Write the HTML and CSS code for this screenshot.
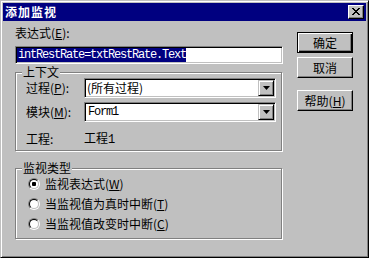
FILE: index.html
```html
<!DOCTYPE html>
<html lang="zh-CN">
  <head>
    <meta charset="UTF-8" />
    <meta name="viewport" content="width=device-width, initial-scale=1.0" />
    <title>添加监视</title>
    <link rel="stylesheet" href="styles.css">
  </head>
  <body>
    <div class="window">
      <div class="titlebar">
        <span class="title">添加监视</span>
        <span class="close">
          <svg width="8" height="7" viewBox="0 0 8 7">
            <path d="M0 0h2v1H0zM6 0h2v1H6zM1 1h2v1H1zM5 1h2v1H5zM2 2h4v1H2zM3 3h2v1H3zM2 4h4v1H2zM1 5h2v1H1zM5 5h2v1H5zM0 6h2v1H0zM6 6h2v1H6z" fill="#000" />
          </svg>
        </span>
      </div>
      <div class="body">
        <div class="main">
          <div class="label">表达式(<u>E</u>):</div>
          <div class="textbox"><span class="sel">intRestRate=txtRestRate.Text</span></div>

          <div class="group context">
            <div class="group-title">上下文</div>
            <div class="fields">
              <span class="field-label">过程(<u>P</u>):</span>
              <div class="combo">
                <span class="value">(所有过程)</span>
                <span class="drop">
                  <svg width="7" height="4" viewBox="0 0 7 4"><path d="M0 0h7L3.5 4z" fill="#000" /></svg>
                </span>
              </div>
              <span class="field-label">模块(<u>M</u>):</span>
              <div class="combo">
                <span class="value mono">Form1</span>
                <span class="drop">
                  <svg width="7" height="4" viewBox="0 0 7 4"><path d="M0 0h7L3.5 4z" fill="#000" /></svg>
                </span>
              </div>
              <span class="field-label last">工程:</span>
              <span class="field-value last">工程<span class="mono">1</span></span>
            </div>
          </div>

          <div class="group kind">
            <div class="group-title">监视类型</div>
            <div class="options">
              <div class="option"><span class="radio checked"><i></i></span><span>监视表达式(<u>W</u>)</span></div>
              <div class="option"><span class="radio"><i></i></span><span>当监视值为真时中断(<u>T</u>)</span></div>
              <div class="option"><span class="radio"><i></i></span><span>当监视值改变时中断(<u>C</u>)</span></div>
            </div>
          </div>
        </div>

        <div class="buttons">
          <button class="btn default">确定</button>
          <button class="btn">取消</button>
          <button class="btn help">帮助(<u>H</u>)</button>
        </div>
      </div>
    </div>
  </body>
</html>
```

FILE: styles.css
```css
* {
  margin: 0;
  padding: 0;
  box-sizing: border-box;
}

body {
  font-family: "Noto Sans CJK SC", "Noto Sans", sans-serif;
  font-size: 12px;
  line-height: 14px;
  color: #000;
  background: #c0c0c0;
}

u {
  text-decoration: underline;
  text-underline-offset: 1px;
}

.mono {
  font-family: "Liberation Mono", "Noto Sans CJK SC", monospace;
  letter-spacing: -1.2px;
}

/* window frame */
.window {
  width: 369px;
  height: 258px;
  background: #c0c0c0;
  border: 1px solid;
  border-color: #c0c0c0 #000 #000 #c0c0c0;
  box-shadow: inset 1px 1px #fff, inset -1px -1px #808080;
  padding: 2px;
}

.titlebar {
  height: 18px;
  background: #000080;
  display: flex;
  align-items: center;
  justify-content: space-between;
  padding: 0 2px 0 2px;
}
.titlebar .title {
  color: #fff;
  font-weight: bold;
  letter-spacing: 1px;
  line-height: 14px;
}
.titlebar .close {
  width: 16px;
  height: 14px;
  background: #c0c0c0;
  border: 1px solid;
  border-color: #fff #000 #000 #fff;
  box-shadow: inset -1px -1px #808080;
  display: flex;
  align-items: center;
  justify-content: center;
  padding: 0 1px 1px 0;
}
.titlebar .close svg {
  display: block;
}

/* dialog content */
.body {
  display: flex;
  padding: 0 13px 0 12px;
}
.main {
  width: 268px;
}
.label {
  margin-top: 5px;
}

.textbox {
  margin-top: 6px;
  height: 18px;
  background: #fff;
  border: 1px solid;
  border-color: #808080 #fff #fff #808080;
  box-shadow: inset 1px 1px #000, inset -1px -1px #c0c0c0;
  padding: 1px;
  overflow: hidden;
  white-space: nowrap;
}
.textbox .sel {
  display: inline-block;
  height: 14px;
  padding-left: 1px;
  background: #000080;
  color: #fff;
  font-family: "Liberation Mono", monospace;
  letter-spacing: -1.2px;
  vertical-align: top;
}

/* etched group boxes */
.group {
  width: 267px;
  border: 1px solid #808080;
  box-shadow: inset 1px 1px #fff, 1px 1px #fff;
}
.group-title {
  width: fit-content;
  margin-top: -7px;
  padding: 0 1px;
  line-height: 12px;
  background: #c0c0c0;
}
.context {
  margin-top: 8px;
  padding: 0 5px 3px 10px;
}
.context .group-title {
  margin-left: -4px;
}
.kind {
  margin-top: 17px;
  padding: 0 5px 4px 12px;
}
.kind .group-title {
  margin-left: -6px;
}

.fields {
  display: grid;
  grid-template-columns: 58px 192px;
  row-gap: 4px;
  align-items: center;
}
.fields .last {
  margin-top: 5px;
}

.combo {
  height: 20px;
  display: flex;
  align-items: center;
  justify-content: space-between;
  background: #fff;
  border: 1px solid;
  border-color: #808080 #fff #fff #808080;
  box-shadow: inset 1px 1px #000, inset -1px -1px #c0c0c0;
  padding: 1px;
}
.combo .value {
  padding-left: 1px;
}
.combo .value.mono {
  padding-left: 2px;
}
.combo .drop {
  width: 16px;
  height: 16px;
  background: #c0c0c0;
  border: 1px solid;
  border-color: #c0c0c0 #000 #000 #c0c0c0;
  box-shadow: inset 1px 1px #fff, inset -1px -1px #808080;
  display: flex;
  align-items: center;
  justify-content: center;
}
.combo .drop svg {
  display: block;
}

.option {
  height: 20px;
  display: flex;
  align-items: center;
  gap: 5px;
}
.radio {
  width: 12px;
  height: 12px;
  border-radius: 50%;
  border: 1px solid;
  border-color: #808080 #fff #fff #808080;
}
.radio i {
  display: block;
  width: 10px;
  height: 10px;
  border-radius: 50%;
  border: 1px solid;
  border-color: #000 #c0c0c0 #c0c0c0 #000;
  background: #fff;
}
.radio.checked i {
  background: radial-gradient(circle at 4px 4px, #000 0 2px, #fff 2.5px);
}

/* push buttons */
.buttons {
  width: 56px;
  margin-left: auto;
  display: flex;
  flex-direction: column;
  padding-top: 11px;
}
.btn {
  height: 21px;
  font: inherit;
  background: #c0c0c0;
  border: 1px solid;
  border-color: #fff #000 #000 #fff;
  box-shadow: inset -1px -1px #808080;
  cursor: pointer;
}
.btn + .btn {
  margin-top: 4px;
}
.btn.default {
  border-color: #000;
  box-shadow: inset 1px 1px #fff, inset -1px -1px #000, inset -2px -2px #808080;
}
.btn.help {
  margin-top: 12px;
}
```
